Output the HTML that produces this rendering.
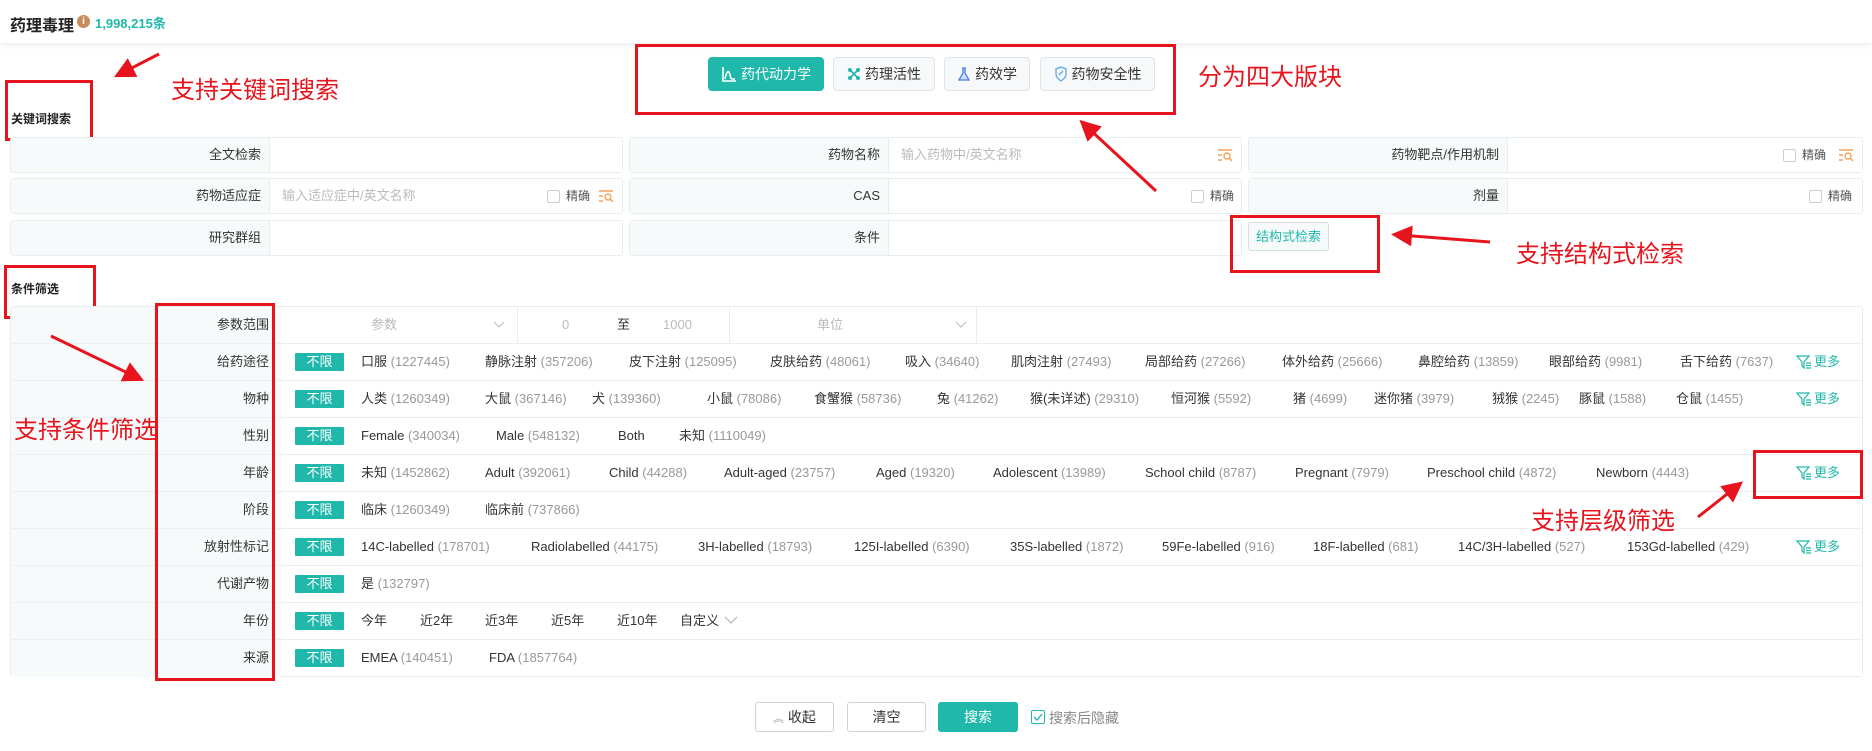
<!DOCTYPE html>
<html><head><meta charset="utf-8"><style>
*{box-sizing:border-box;margin:0;padding:0}
body{width:1872px;height:751px;position:relative;background:#fff;font-family:"Liberation Sans","Noto Sans CJK SC",sans-serif;font-size:13px;color:#333;overflow:hidden}
.a{position:absolute;white-space:nowrap}
.hdr{position:absolute;left:0;top:0;width:1872px;height:43px;background:#fff;box-shadow:0 2px 6px rgba(0,0,0,.08)}
.red{position:absolute;border:3px solid #e8141d}
.rt{position:absolute;color:#e8141d;font-size:24px;white-space:nowrap}
.tab{position:absolute;top:57px;height:34px;border:1px solid #dde3e8;border-radius:4px;background:#f6f8fa;font-size:14px;line-height:32px;display:flex;align-items:center;justify-content:center;gap:4px;color:#333}
.tab.on{background:#20b8aa;border-color:#20b8aa;color:#fff}
.cell{position:absolute;height:36px;border:1px solid #e6eef0;border-radius:3px;background:#fff}
.cell .lb{position:absolute;left:0;top:0;bottom:0;background:#f7fafb;border-right:1px solid #e6eef0;text-align:right;padding-right:8px;line-height:34px}
.ph{position:absolute;top:0;line-height:34px;color:#bbb}
.chk{position:absolute;width:13px;height:13px;border:1px solid #ccc;border-radius:2px;top:11px}
.jq{position:absolute;top:0;line-height:34px;color:#555;font-size:12px}
.srch{position:absolute;top:10px}
.tbl{position:absolute;left:10px;top:306px;width:1853px;height:371px;border:1px solid #e6eef0;border-radius:3px}
.row{position:absolute;left:0;width:1851px;height:37px;border-bottom:1px solid #eaf0f2}
.row .l{position:absolute;left:0;width:270px;height:100%;background:#f7fafb;text-align:right;padding-right:12px;line-height:36px}
.row .i{position:absolute;top:0;line-height:36px;white-space:nowrap}
.n{color:#999}
.tag{position:absolute;left:284px;top:9px;width:49px;height:18px;background:#20b8aa;color:#fff;line-height:18px;text-align:center;font-size:13px;border-radius:1px}
.more{position:absolute;left:1785px;top:0;line-height:36px;color:#20b8aa;display:flex;align-items:center;gap:2px}
.btn{position:absolute;top:702px;height:30px;border:1px solid #cdd3dc;border-radius:3px;background:#fff;text-align:center;line-height:28px;font-size:14px}
</style></head><body>
<div class="hdr"></div>
<div class="a" style="left:10px;top:12px;font-size:16px;font-weight:bold;color:#222">药理毒理</div>
<div class="a" style="left:77px;top:15px;width:13px;height:13px;border-radius:50%;background:#c98a5e;color:#fff;font-size:10px;font-weight:bold;text-align:center;line-height:13px">i</div>
<div class="a" style="left:95px;top:13px;font-size:13px;font-weight:bold;color:#20b8aa">1,998,215条</div>

<div class="tab on" style="left:708px;width:116px"><svg width="16" height="16" viewBox="0 0 16 16"><path d="M2 1v14h13M4 13c2-9 4-9 5-4s2 4 5 4" fill="none" stroke="#fff" stroke-width="1.6"/></svg>药代动力学</div>
<div class="tab" style="left:833px;width:102px"><svg width="14" height="14" viewBox="0 0 14 14"><g stroke="#20b8aa" stroke-width="1.6"><path d="M3 3l8 8M11 3l-8 8"/></g><g fill="#20b8aa"><circle cx="3" cy="3" r="2"/><circle cx="11" cy="3" r="2"/><circle cx="3" cy="11" r="2"/><circle cx="11" cy="11" r="2"/></g></svg>药理活性</div>
<div class="tab" style="left:944px;width:86px"><svg width="14" height="15" viewBox="0 0 14 15"><path d="M5 1h4M6 1v5L2 13h10L8 6V1" fill="#cfe0ff" stroke="#4a7fe0" stroke-width="1.3"/></svg>药效学</div>
<div class="tab" style="left:1040px;width:115px"><svg width="14" height="16" viewBox="0 0 14 16"><path d="M7 1l5 2v5c0 3-2 5-5 7-3-2-5-4-5-7V3z" fill="none" stroke="#5aa8e8" stroke-width="1.3"/><path d="M5 9l4-4" stroke="#5aa8e8" stroke-width="1.3"/></svg>药物安全性</div>
<div class="red" style="left:635px;top:44px;width:541px;height:71px"></div>
<div class="rt" style="left:1198px;top:57px">分为四大版块</div>

<div class="rt" style="left:171px;top:70px">支持关键词搜索</div>
<div class="red" style="left:5px;top:80px;width:88px;height:61px"></div>
<div class="a" style="left:11px;top:110px;font-size:12px;font-weight:bold;color:#222">关键词搜索</div>

<div class="cell" style="left:10px;top:137px;width:613px"><div class="lb" style="width:259px">全文检索</div></div>
<div class="cell" style="left:629px;top:137px;width:613px"><div class="lb" style="width:259px">药物名称</div><div class="ph" style="left:271px">输入药物中/英文名称</div>
<svg class="srch" style="left:587px" width="16" height="14" viewBox="0 0 16 14"><g stroke="#f4a25a" stroke-width="1.4" fill="none"><path d="M1 2h14M1 7h4M1 12h4"/><circle cx="10" cy="8" r="3"/><path d="M12 10l3 3"/></g></svg></div>
<div class="cell" style="left:1248px;top:137px;width:615px"><div class="lb" style="width:259px">药物靶点/作用机制</div><div class="chk" style="left:534px"></div><div class="jq" style="left:553px">精确</div>
<svg class="srch" style="left:589px" width="16" height="14" viewBox="0 0 16 14"><g stroke="#f4a25a" stroke-width="1.4" fill="none"><path d="M1 2h14M1 7h4M1 12h4"/><circle cx="10" cy="8" r="3"/><path d="M12 10l3 3"/></g></svg></div>

<div class="cell" style="left:10px;top:178px;width:613px"><div class="lb" style="width:259px">药物适应症</div><div class="ph" style="left:271px">输入适应症中/英文名称</div><div class="chk" style="left:536px"></div><div class="jq" style="left:555px">精确</div>
<svg class="srch" style="left:587px" width="16" height="14" viewBox="0 0 16 14"><g stroke="#f4a25a" stroke-width="1.4" fill="none"><path d="M1 2h14M1 7h4M1 12h4"/><circle cx="10" cy="8" r="3"/><path d="M12 10l3 3"/></g></svg></div>
<div class="cell" style="left:629px;top:178px;width:613px"><div class="lb" style="width:259px">CAS</div><div class="chk" style="left:561px"></div><div class="jq" style="left:580px">精确</div></div>
<div class="cell" style="left:1248px;top:178px;width:615px"><div class="lb" style="width:259px">剂量</div><div class="chk" style="left:560px"></div><div class="jq" style="left:579px">精确</div></div>

<div class="cell" style="left:10px;top:220px;width:613px"><div class="lb" style="width:259px">研究群组</div></div>
<div class="cell" style="left:629px;top:220px;width:613px"><div class="lb" style="width:259px">条件</div></div>
<div class="a" style="left:1248px;top:222px;width:81px;height:29px;border:1px solid #d5dde5;border-radius:3px;background:#f7fafb;color:#20b8aa;line-height:27px;text-align:center;font-size:13px">结构式检索</div>
<div class="red" style="left:1230px;top:215px;width:150px;height:58px"></div>
<div class="rt" style="left:1516px;top:234px">支持结构式检索</div>

<div class="a" style="left:11px;top:280px;font-size:12px;font-weight:bold;color:#222">条件筛选</div>
<div class="red" style="left:4px;top:265px;width:92px;height:54px"></div>

<div class="tbl">
<div class="row" style="top:0"><div class="l">参数范围</div>
<div class="i" style="left:360px;color:#bbb">参数</div><svg class="a" style="left:482px;top:14px" width="12" height="8"><path d="M1 1l5 5 5-5" fill="none" stroke="#bbb"/></svg>
<div class="a" style="left:506px;top:0;height:36px;border-left:1px solid #eaeef0"></div>
<div class="i" style="left:551px;color:#bbb">0</div><div class="i" style="left:606px">至</div><div class="i" style="left:652px;color:#bbb">1000</div>
<div class="a" style="left:718px;top:0;height:36px;border-left:1px solid #eaeef0"></div>
<div class="i" style="left:806px;color:#bbb">单位</div><svg class="a" style="left:944px;top:14px" width="12" height="8"><path d="M1 1l5 5 5-5" fill="none" stroke="#bbb"/></svg>
<div class="a" style="left:965px;top:0;height:36px;border-left:1px solid #eaeef0"></div>
</div>
<div class="row" style="top:37px"><div class="l">给药途径</div><div class="tag">不限</div>
<div class="i" style="left:350px">口服 <span class="n">(1227445)</span></div>
<div class="i" style="left:474px">静脉注射 <span class="n">(357206)</span></div>
<div class="i" style="left:618px">皮下注射 <span class="n">(125095)</span></div>
<div class="i" style="left:759px">皮肤给药 <span class="n">(48061)</span></div>
<div class="i" style="left:894px">吸入 <span class="n">(34640)</span></div>
<div class="i" style="left:1000px">肌肉注射 <span class="n">(27493)</span></div>
<div class="i" style="left:1134px">局部给药 <span class="n">(27266)</span></div>
<div class="i" style="left:1271px">体外给药 <span class="n">(25666)</span></div>
<div class="i" style="left:1407px">鼻腔给药 <span class="n">(13859)</span></div>
<div class="i" style="left:1538px">眼部给药 <span class="n">(9981)</span></div>
<div class="i" style="left:1669px">舌下给药 <span class="n">(7637)</span></div>
<div class="more"><svg width="16" height="14" viewBox="0 0 16 14"><path d="M1 1h12L8 7v6L6 11V7z M10 8h5M10 10.5h5M10 13h5" fill="none" stroke="#20b8aa" stroke-width="1.2"/></svg>更多</div></div>
<div class="row" style="top:74px"><div class="l">物种</div><div class="tag">不限</div>
<div class="i" style="left:350px">人类 <span class="n">(1260349)</span></div>
<div class="i" style="left:474px">大鼠 <span class="n">(367146)</span></div>
<div class="i" style="left:581px">犬 <span class="n">(139360)</span></div>
<div class="i" style="left:696px">小鼠 <span class="n">(78086)</span></div>
<div class="i" style="left:803px">食蟹猴 <span class="n">(58736)</span></div>
<div class="i" style="left:926px">兔 <span class="n">(41262)</span></div>
<div class="i" style="left:1019px">猴(未详述) <span class="n">(29310)</span></div>
<div class="i" style="left:1160px">恒河猴 <span class="n">(5592)</span></div>
<div class="i" style="left:1282px">猪 <span class="n">(4699)</span></div>
<div class="i" style="left:1363px">迷你猪 <span class="n">(3979)</span></div>
<div class="i" style="left:1481px">狨猴 <span class="n">(2245)</span></div>
<div class="i" style="left:1568px">豚鼠 <span class="n">(1588)</span></div>
<div class="i" style="left:1665px">仓鼠 <span class="n">(1455)</span></div>
<div class="more"><svg width="16" height="14" viewBox="0 0 16 14"><path d="M1 1h12L8 7v6L6 11V7z M10 8h5M10 10.5h5M10 13h5" fill="none" stroke="#20b8aa" stroke-width="1.2"/></svg>更多</div></div>
<div class="row" style="top:111px"><div class="l">性别</div><div class="tag">不限</div>
<div class="i" style="left:350px">Female <span class="n">(340034)</span></div>
<div class="i" style="left:485px">Male <span class="n">(548132)</span></div>
<div class="i" style="left:607px">Both</div>
<div class="i" style="left:668px">未知 <span class="n">(1110049)</span></div></div>
<div class="row" style="top:148px"><div class="l">年龄</div><div class="tag">不限</div>
<div class="i" style="left:350px">未知 <span class="n">(1452862)</span></div>
<div class="i" style="left:474px">Adult <span class="n">(392061)</span></div>
<div class="i" style="left:598px">Child <span class="n">(44288)</span></div>
<div class="i" style="left:713px">Adult-aged <span class="n">(23757)</span></div>
<div class="i" style="left:865px">Aged <span class="n">(19320)</span></div>
<div class="i" style="left:982px">Adolescent <span class="n">(13989)</span></div>
<div class="i" style="left:1134px">School child <span class="n">(8787)</span></div>
<div class="i" style="left:1284px">Pregnant <span class="n">(7979)</span></div>
<div class="i" style="left:1416px">Preschool child <span class="n">(4872)</span></div>
<div class="i" style="left:1585px">Newborn <span class="n">(4443)</span></div>
<div class="more"><svg width="16" height="14" viewBox="0 0 16 14"><path d="M1 1h12L8 7v6L6 11V7z M10 8h5M10 10.5h5M10 13h5" fill="none" stroke="#20b8aa" stroke-width="1.2"/></svg>更多</div></div>
<div class="row" style="top:185px"><div class="l">阶段</div><div class="tag">不限</div>
<div class="i" style="left:350px">临床 <span class="n">(1260349)</span></div>
<div class="i" style="left:474px">临床前 <span class="n">(737866)</span></div></div>
<div class="row" style="top:222px"><div class="l">放射性标记</div><div class="tag">不限</div>
<div class="i" style="left:350px">14C-labelled <span class="n">(178701)</span></div>
<div class="i" style="left:520px">Radiolabelled <span class="n">(44175)</span></div>
<div class="i" style="left:687px">3H-labelled <span class="n">(18793)</span></div>
<div class="i" style="left:843px">125I-labelled <span class="n">(6390)</span></div>
<div class="i" style="left:999px">35S-labelled <span class="n">(1872)</span></div>
<div class="i" style="left:1151px">59Fe-labelled <span class="n">(916)</span></div>
<div class="i" style="left:1302px">18F-labelled <span class="n">(681)</span></div>
<div class="i" style="left:1447px">14C/3H-labelled <span class="n">(527)</span></div>
<div class="i" style="left:1616px">153Gd-labelled <span class="n">(429)</span></div>
<div class="more"><svg width="16" height="14" viewBox="0 0 16 14"><path d="M1 1h12L8 7v6L6 11V7z M10 8h5M10 10.5h5M10 13h5" fill="none" stroke="#20b8aa" stroke-width="1.2"/></svg>更多</div></div>
<div class="row" style="top:259px"><div class="l">代谢产物</div><div class="tag">不限</div>
<div class="i" style="left:350px">是 <span class="n">(132797)</span></div></div>
<div class="row" style="top:296px"><div class="l">年份</div><div class="tag">不限</div>
<div class="i" style="left:350px">今年</div><div class="i" style="left:409px">近2年</div><div class="i" style="left:474px">近3年</div><div class="i" style="left:540px">近5年</div><div class="i" style="left:606px">近10年</div><div class="i" style="left:669px">自定义</div>
<svg class="a" style="left:713px;top:13px" width="14" height="9"><path d="M1 1l6 6 6-6" fill="none" stroke="#bbb" stroke-width="1.3"/></svg></div>
<div class="row" style="top:333px;border-bottom:none"><div class="l">来源</div><div class="tag">不限</div>
<div class="i" style="left:350px">EMEA <span class="n">(140451)</span></div>
<div class="i" style="left:478px">FDA <span class="n">(1857764)</span></div></div>
</div>
<div class="red" style="left:155px;top:303px;width:120px;height:378px"></div>
<div class="red" style="left:1753px;top:450px;width:110px;height:49px"></div>
<div class="rt" style="left:14px;top:410px">支持条件筛选</div>
<div class="rt" style="left:1531px;top:501px">支持层级筛选</div>

<div class="btn" style="left:755px;width:79px"><span style="color:#999;font-size:11px">︽</span> 收起</div>
<div class="btn" style="left:847px;width:79px">清空</div>
<div class="btn" style="left:938px;width:80px;background:#20b8aa;border-color:#20b8aa;color:#fff">搜索</div>
<div class="a" style="left:1031px;top:710px;width:14px;height:14px;border:1px solid #20b8aa;border-radius:2px"><svg width="12" height="12" style="position:absolute;left:0;top:0"><path d="M2 6l3 3 5-6" fill="none" stroke="#20b8aa" stroke-width="1.3"/></svg></div>
<div class="a" style="left:1049px;top:708px;font-size:14px;color:#888">搜索后隐藏</div>

<svg class="a" style="left:0;top:0" width="1872" height="751">
<defs><marker id="h" markerWidth="7" markerHeight="7" refX="4" refY="3.5" orient="auto"><path d="M0 0L7 3.5L0 7z" fill="#e8141d"/></marker></defs>
<g stroke="#e8141d" stroke-width="3" marker-end="url(#h)">
<path d="M159 54L122 73"/>
<path d="M1156 191L1086 126"/>
<path d="M1490 242L1400 235"/>
<path d="M51 336L136 377"/>
<path d="M1698 517L1736 487"/>
</g></svg>
</body></html>
